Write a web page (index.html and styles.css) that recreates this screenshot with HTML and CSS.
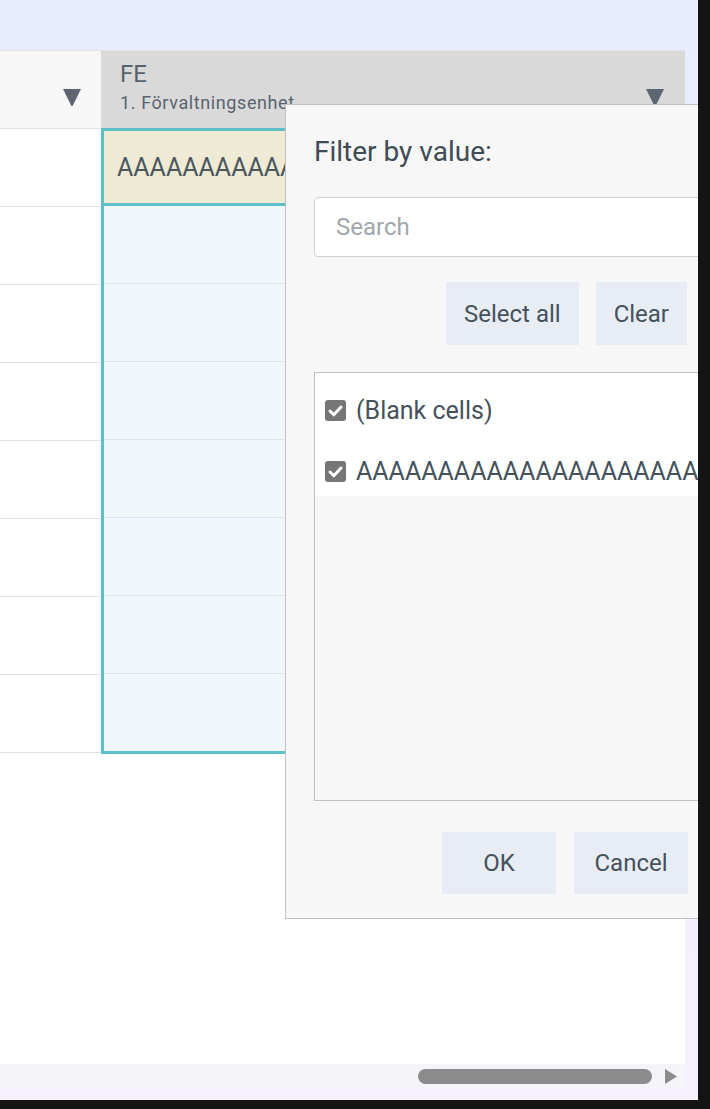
FILE: index.html
```html
<!DOCTYPE html>
<html lang="en">

<head>
    <meta charset="UTF-8">
    <meta name="viewport" content="width=device-width, initial-scale=1.0">
    <title>Filter by value</title>
    <link rel="stylesheet" href="styles.css">
</head>

<body>
    <div class="frame">
        <div class="grid">
            <div class="table">
                <div class="col col-first">
                    <div class="head">
                        <div class="head-text"></div>
                        <svg class="arrow" width="18" height="17" viewBox="0 0 18 17"><polygon points="0,0 18,0 9.6,17 8.4,17" fill="#5c6670"/></svg>
                    </div>
                    <div class="cell"></div>
                    <div class="cell"></div>
                    <div class="cell"></div>
                    <div class="cell"></div>
                    <div class="cell"></div>
                    <div class="cell"></div>
                    <div class="cell"></div>
                    <div class="cell"></div>
                </div>
                <div class="col col-fe">
                    <div class="head head-fe">
                        <div class="head-text">
                            <div class="head-title">FE</div>
                            <div class="head-sub">1. Förvaltningsenhet</div>
                        </div>
                        <svg class="arrow" width="18" height="17" viewBox="0 0 18 17"><polygon points="0,0 18,0 9.6,17 8.4,17" fill="#5c6670"/></svg>
                    </div>
                    <div class="range">
                        <div class="cell cell-active">AAAAAAAAAAAAAAAAAAAAAAAAAAAAAA</div>
                        <div class="cell cell-sel"></div>
                        <div class="cell cell-sel"></div>
                        <div class="cell cell-sel"></div>
                        <div class="cell cell-sel"></div>
                        <div class="cell cell-sel"></div>
                        <div class="cell cell-sel"></div>
                        <div class="cell cell-sel"></div>
                    </div>
                </div>
            </div>
            <div class="spacer"></div>
            <div class="hscroll">
                <div class="thumb"></div>
                <svg class="scroll-arrow" width="12" height="15" viewBox="0 0 12 15"><polygon points="0,0 12,7.5 0,15" fill="#8c8c8c"/></svg>
            </div>
        </div>

        <div class="popup">
            <h2 class="popup-title">Filter by value:</h2>
            <input class="search" type="text" placeholder="Search">
            <div class="btn-row btn-row-top">
                <button class="btn">Select all</button>
                <button class="btn">Clear</button>
            </div>
            <div class="value-list">
                <label class="value-item">
                    <span class="check"><svg width="21" height="21" viewBox="0 0 21 21"><rect width="21" height="21" rx="3" fill="#767676"/><path d="M5 11 L8.8 14.8 L16 7" stroke="#fff" stroke-width="3" fill="none" stroke-linecap="round" stroke-linejoin="round"/></svg></span>
                    <span class="value-text">(Blank cells)</span>
                </label>
                <label class="value-item">
                    <span class="check"><svg width="21" height="21" viewBox="0 0 21 21"><rect width="21" height="21" rx="3" fill="#767676"/><path d="M5 11 L8.8 14.8 L16 7" stroke="#fff" stroke-width="3" fill="none" stroke-linecap="round" stroke-linejoin="round"/></svg></span>
                    <span class="value-text">AAAAAAAAAAAAAAAAAAAAAAAAAAAAAA</span>
                </label>
            </div>
            <div class="btn-row btn-row-bottom">
                <button class="btn btn-wide">OK</button>
                <button class="btn btn-wide">Cancel</button>
            </div>
        </div>
    </div>
</body>

</html>
```

FILE: styles.css
```css
body {
    margin: 0;
    background-color: #141414;
    font-family: Roboto, sans-serif;
    color: #45525c;
}

.frame {
    position: relative;
    width: 698px;
    height: 1100px;
    overflow: hidden;
    background: linear-gradient(#e8ecfd, #f6f0fc);
}

.grid {
    margin-top: 50px;
    width: 685px;
    height: 1038px;
    background-color: #ffffff;
    display: flex;
    flex-direction: column;
}

.table {
    display: flex;
}

.col-first {
    width: 101px;
}

.col-fe {
    width: 584px;
}

.head {
    height: 79px;
    box-sizing: border-box;
    border-top: 1px solid #e2e3e8;
    border-bottom: 1px solid #e2e2e2;
    background-color: #f7f7f7;
    display: flex;
    justify-content: space-between;
    align-items: flex-start;
    padding: 9px 20px 0 19px;
}

.head-fe {
    background-color: #d9d9d9;
    border-bottom: none;
    height: 78px;
    padding-right: 21px;
}

.head .arrow {
    margin-top: 29px;
}

.head-title {
    font-size: 24px;
    line-height: 28px;
    color: #58626c;
}

.head-sub {
    margin-top: 4px;
    font-size: 18px;
    line-height: 21px;
    letter-spacing: 0.6px;
    color: #5a646e;
    white-space: nowrap;
}

.cell {
    height: 78px;
    box-sizing: border-box;
    border-bottom: 1px solid #e3e3e3;
}

.range {
    border-left: 3px solid #5dc0c9;
    border-bottom: 3px solid #5dc0c9;
}

.cell-active {
    background-color: #efead3;
    border-top: 3px solid #5dc0c9;
    border-bottom: 3px solid #5dc0c9;
    padding-left: 13px;
    font-size: 25px;
    line-height: 74px;
    color: #4a5761;
    white-space: nowrap;
    overflow: hidden;
}

.cell-sel {
    background-color: #eff7fa;
    border-bottom: 1px solid #dde6ea;
}

.cell-sel:last-child {
    border-bottom: none;
    height: 77px;
}

.spacer {
    flex: 1;
}

.hscroll {
    height: 24px;
    background-color: #f5f4f9;
    display: flex;
    align-items: center;
}

.thumb {
    margin-left: 418px;
    width: 234px;
    height: 15px;
    border-radius: 8px;
    background-color: #8c8c8c;
}

.scroll-arrow {
    margin-left: 13px;
}

.popup {
    position: absolute;
    left: 285px;
    top: 104px;
    width: 460px;
    box-sizing: border-box;
    padding: 30px 29px 24px 28px;
    background-color: #f7f7f7;
    border: 1px solid #bfc0c8;
}

.popup-title {
    margin: 0;
    font-size: 28px;
    font-weight: 400;
    line-height: 33px;
    color: #3f4b55;
}

.search {
    display: block;
    margin-top: 29px;
    width: 100%;
    height: 60px;
    box-sizing: border-box;
    padding: 0 21px;
    border: 1px solid #cfd0d4;
    border-radius: 4px;
    background-color: #ffffff;
    font-family: Roboto, sans-serif;
    font-size: 24px;
    color: #45525c;
}

.search::placeholder {
    color: #a0a6ad;
}

.btn-row {
    display: flex;
    justify-content: flex-end;
    gap: 17px;
    padding-right: 28px;
}

.btn-row-top {
    margin-top: 25px;
}

.btn-row-bottom {
    margin-top: 31px;
    gap: 18px;
    padding-right: 27px;
}

.btn {
    height: 63px;
    padding: 0 18px;
    border: none;
    border-radius: 0;
    background-color: #e8ecf4;
    font-family: Roboto, sans-serif;
    font-size: 24px;
    color: #45525c;
}

.btn-wide {
    width: 114px;
    height: 62px;
}

.value-list {
    margin-top: 27px;
    height: 429px;
    box-sizing: border-box;
    border: 1px solid #c0c0c8;
    background-color: #f7f7f7;
}

.value-item {
    height: 62px;
    box-sizing: border-box;
    display: flex;
    align-items: center;
    gap: 10px;
    padding: 12px 0 0 10px;
    background-color: #ffffff;
    font-size: 25px;
    white-space: nowrap;
    overflow: hidden;
}

.value-item:last-child {
    height: 61px;
}

.check {
    display: flex;
}
```
